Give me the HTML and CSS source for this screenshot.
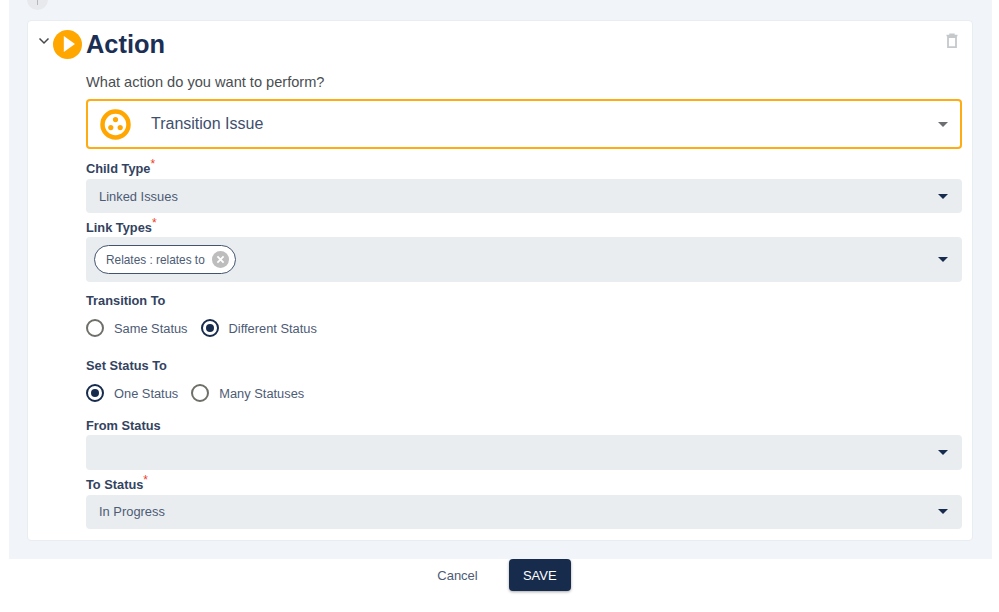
FILE: index.html
```html
<!DOCTYPE html>
<html lang="en">
<head>
<meta charset="utf-8">
<title>Action</title>
<link rel="stylesheet" href="styles.css">
</head>
<body>
<main class="panel">
  <div class="stub"><span class="stub-line"></span></div>
  <section class="card">
    <button class="trash" aria-label="Delete">
      <svg width="14" height="16" viewBox="0 0 14 16"><path d="M1.5 2.5h11M5 2.5V1.2h4v1.3" fill="none" stroke="#c6c9cb" stroke-width="1.4"/><path d="M3 4h8v10.2H3z" fill="#fff" stroke="#c6c9cb" stroke-width="1.8"/></svg>
    </button>
    <header class="head">
      <svg class="chev" width="12" height="8" viewBox="0 0 12 8"><path d="M1.5 1.5 6 6l4.5-4.5" fill="none" stroke="#45484c" stroke-width="1.5"/></svg>
      <svg class="play" width="29" height="29" viewBox="0 0 29 29"><circle cx="14.5" cy="14.5" r="14.5" fill="#ffa600"/><path d="M10.8 6 22 14 10.8 22z" fill="#fff"/></svg>
      <h1 class="title">Action</h1>
    </header>
    <div class="body">
      <p class="question">What action do you want to perform?</p>
      <div class="picker">
        <svg class="picker-icon" width="31" height="31" viewBox="0 0 31 31"><circle cx="15.5" cy="15.5" r="13" fill="#fff" stroke="#ffa600" stroke-width="4.5"/><circle cx="15.5" cy="10.6" r="2.6" fill="#ffa600"/><circle cx="10.8" cy="18.6" r="2.6" fill="#ffa600"/><circle cx="20.2" cy="18.6" r="2.6" fill="#ffa600"/></svg>
        <span class="picker-text">Transition Issue</span>
        <span class="caret caret-grey"></span>
      </div>

      <label class="label label-child">Child Type<sup class="req">*</sup></label>
      <div class="select"><span>Linked Issues</span><span class="caret"></span></div>

      <label class="label label-link">Link Types<sup class="req">*</sup></label>
      <div class="select select-tall">
        <span class="chip">Relates : relates to
          <svg class="chip-x" width="17" height="17" viewBox="0 0 17 17"><circle cx="8.5" cy="8.5" r="8.5" fill="#bdbdbd"/><path d="M5.4 5.4l6.2 6.2M11.6 5.4l-6.2 6.2" stroke="#fff" stroke-width="1.8"/></svg>
        </span>
        <span class="caret"></span>
      </div>

      <p class="label label-transition">Transition To</p>
      <div class="radios">
        <span class="radio"><i class="dot"></i>Same Status</span>
        <span class="radio"><i class="dot on"></i>Different Status</span>
      </div>

      <p class="label label-set">Set Status To</p>
      <div class="radios">
        <span class="radio"><i class="dot on"></i>One Status</span>
        <span class="radio"><i class="dot"></i>Many Statuses</span>
      </div>

      <label class="label label-from">From Status</label>
      <div class="select select-from"><span></span><span class="caret"></span></div>

      <label class="label label-to">To Status<sup class="req">*</sup></label>
      <div class="select select-to"><span>In Progress</span><span class="caret"></span></div>
    </div>
  </section>
</main>
<footer class="actions">
  <button class="cancel">Cancel</button>
  <button class="save">SAVE</button>
</footer>
</body>
</html>
```
FILE: styles.css
```css
* { box-sizing: border-box; }
html, body { margin: 0; padding: 0; }
body {
  width: 999px;
  height: 612px;
  overflow: hidden;
  background: #fff;
  font-family: "Liberation Sans", Arial, sans-serif;
  color: #172b4d;
}
.panel {
  position: relative;
  height: 559px;
  margin: 0 7px 0 9px;
  padding: 20px 19px 0 18px;
  background: #f1f5f9;
}
.stub {
  position: absolute;
  left: 18px;
  top: -11px;
  width: 21px;
  height: 21px;
  border-radius: 50%;
  background: #e7e9ec;
  display: flex;
  justify-content: center;
}
.stub-line {
  width: 1px;
  height: 16px;
  background: #b5b8bc;
}
.card {
  position: relative;
  height: 521px;
  background: #fff;
  border: 1px solid #e8edf2;
  border-radius: 4px;
}
.trash {
  position: absolute;
  right: 13px;
  top: 12px;
  padding: 0;
  border: 0;
  background: none;
  line-height: 0;
}
.head {
  display: flex;
  align-items: center;
  height: 46px;
  padding-left: 10px;
}
.chev { margin-right: 3px; margin-top: -7px; }
.play { margin-right: 4px; }
.title {
  margin: 0;
  font-size: 25.4px;
  font-weight: 700;
  line-height: 46px;
  color: #1b2f55;
}
.body { padding: 0 10px 0 58px; }
.question {
  margin: 5px 0 0;
  height: 20px;
  font-size: 14.6px;
  line-height: 20px;
  color: #4a4e52;
}
.picker {
  display: flex;
  align-items: center;
  height: 50px;
  margin-top: 7px;
  padding: 0 12px 0 12px;
  border: 2px solid #ffab12;
  border-radius: 4px;
}
.picker-text {
  flex: 1;
  margin-left: 20px;
  font-size: 16px;
  color: #3f4f6d;
}
.label {
  display: block;
  margin: 0;
  height: 16px;
  font-size: 12.8px;
  font-weight: 700;
  line-height: 16px;
  color: #33435f;
}
.label-child { margin-top: 12px; }
.label-link { margin-top: 7px; }
.label-transition { margin-top: 11px; }
.label-set { margin-top: 20px; }
.label-from { margin-top: 15px; }
.label-to { margin-top: 7px; }
.req {
  color: #f03d1f;
  font-size: 12px;
  font-weight: 400;
  line-height: 0;
  vertical-align: 5px;
}
.select {
  display: flex;
  align-items: center;
  justify-content: space-between;
  height: 34px;
  margin-top: 2px;
  padding: 0 14px 0 13px;
  background: #e9edf0;
  border-radius: 4px;
  font-size: 12.9px;
  color: #4d5b75;
}
.select-tall { height: 45px; margin-top: 1px; padding-left: 8px; }
.select-from { height: 35px; margin-top: 1px; }
.select-to { padding-bottom: 1px; }
.caret {
  width: 0;
  height: 0;
  border-left: 5px solid transparent;
  border-right: 5px solid transparent;
  border-top: 5px solid #172b4d;
}
.caret-grey { border-top-color: #6b6f73; }
.chip {
  display: flex;
  align-items: center;
  height: 29px;
  padding: 0 6px 0 11px;
  background: #fff;
  border: 1px solid #44546f;
  border-radius: 15px;
  font-size: 11.85px;
  color: #4d5b75;
}
.chip-x { margin-left: 7px; }
.radios {
  display: flex;
  align-items: center;
  gap: 14px;
  height: 20px;
  margin-top: 9px;
}
.radio {
  display: flex;
  align-items: center;
  gap: 0;
  font-size: 12.85px;
  color: #4d5b75;
}
.radio + .radio { margin-left: -1px; }
.dot {
  position: relative;
  width: 18px;
  height: 18px;
  margin-right: 10px;
  border: 2px solid #6f6f6a;
  border-radius: 50%;
  background: #fff;
}
.dot.on { border-color: #172b4d; }
.dot.on::after {
  content: "";
  position: absolute;
  left: 3px;
  top: 3px;
  width: 8px;
  height: 8px;
  border-radius: 50%;
  background: #172b4d;
}
.actions {
  display: flex;
  align-items: center;
  justify-content: center;
  gap: 31px;
  height: 32px;
  margin: 0 0 0 9px;
}
.cancel {
  padding: 0;
  border: 0;
  background: none;
  font: 13px "Liberation Sans", Arial, sans-serif;
  color: #4d5b75;
}
.save {
  width: 62px;
  height: 32px;
  padding: 0;
  border: 0;
  border-radius: 4px;
  background: #172b4d;
  color: #fff;
  font: 13px "Liberation Sans", Arial, sans-serif;
  box-shadow: 0 1px 3px rgba(0,0,0,.35);
}
```
